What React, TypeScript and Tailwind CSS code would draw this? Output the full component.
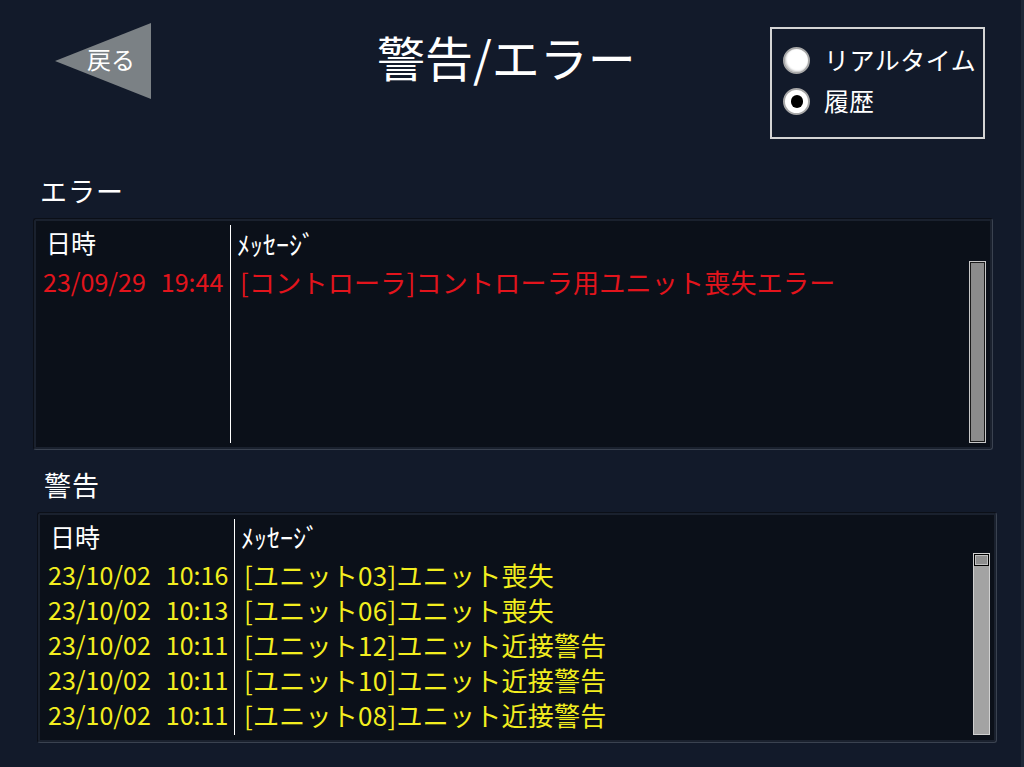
export default function App() {
  const warnings = [
    ["23/10/02", "10:16", "[ユニット03]ユニット喪失"],
    ["23/10/02", "10:13", "[ユニット06]ユニット喪失"],
    ["23/10/02", "10:11", "[ユニット12]ユニット近接警告"],
    ["23/10/02", "10:11", "[ユニット10]ユニット近接警告"],
    ["23/10/02", "10:11", "[ユニット08]ユニット近接警告"],
  ];
  return (
    <div className="w-[1024px] h-[767px] bg-[#121a2a] overflow-hidden text-white font-['Noto_Sans_CJK_JP','Noto_Sans',sans-serif] border-r-[3px] border-[#1d2737]">
      {/* Header */}
      <div className="flex items-start h-[170px]">
        <button className="relative ml-[55px] mt-[23px] w-[97px] h-[76px] flex items-center pb-[4px]">
          <svg className="absolute inset-0" width="97" height="76" viewBox="0 0 97 76">
            <polygon points="0,38 96,0 96,76" fill="#7b8185" />
          </svg>
          <span className="relative pl-[32px] text-[24px] leading-[30px] text-white">戻る</span>
        </button>
        <h1 className="ml-[225px] mt-[31px] text-[48px] leading-[50px] font-normal">警告/エラー</h1>
        <div className="ml-auto mr-[36px] mt-[27px] w-[215px] h-[112px] border-2 border-[#d4d4d4] pt-[11px] pl-[11px]">
          <div className="flex items-center h-[41px] gap-[14px]">
            <div className="w-[27px] h-[27px] rounded-full bg-white border-2 border-[#a8a8a8] shadow-[inset_1px_-1px_2px_#c0c0c0]" />
            <span className="text-[25px] leading-[30px] tracking-[0.5px] pb-[3px]">リアルタイム</span>
          </div>
          <div className="flex items-center h-[41px] gap-[14px]">
            <div className="w-[27px] h-[27px] rounded-full bg-white border-2 border-[#a8a8a8] flex items-center justify-center">
              <div className="w-[12px] h-[13px] rounded-full bg-black" />
            </div>
            <span className="text-[25px] leading-[30px] pb-[3px]">履歴</span>
          </div>
        </div>
      </div>

      {/* Error section */}
      <div className="h-[48px] pl-[40px] pt-[3px] text-[27px] leading-[36px] tracking-[1px]">エラー</div>
      <div className="ml-[33px] w-[960px] h-[232px] rounded-[3px] border border-t-[#0b0f17] border-l-[#0b0f17] border-r-[#3a4250] border-b-[#3a4250] bg-[#1a212e] p-[2px]">
        <div className="flex h-full bg-[#0b1019] pl-[3px] pt-[4px] pb-[4px] pr-[2px]">
          <div className="w-[191px] shrink-0">
            <div className="h-[42px] flex items-center pb-[6px] pl-[7px] text-[25px]">日時</div>
            <div className="h-[35px] flex items-center pb-[6px] pl-[4px] text-[25px] text-[#e3141c]">
              <span>23/09/29</span>
              <span className="ml-[15px]">19:44</span>
            </div>
          </div>
          <div className="flex-1 border-l border-white">
            <div className="h-[42px] flex items-center pb-[6px] pl-[6px] text-[26px]">ﾒｯｾｰｼﾞ</div>
            <div className="h-[35px] flex items-center pb-[6px] pl-[9px] text-[26px] text-[#e3141c] tracking-[0.25px]">[コントローラ]コントローラ用ユニット喪失エラー</div>
          </div>
          <div className="w-[17px] mt-[36px] mr-[2px] border border-[#c8c8c8] bg-[#8c8c8c] shadow-[inset_0_0_0_1px_#1a1a1a]" />
        </div>
      </div>

      {/* Warning section */}
      <div className="h-[62px] pl-[44px] pt-[17px] text-[27px] leading-[36px] tracking-[1px]">警告</div>
      <div className="ml-[37px] w-[960px] h-[231px] rounded-[3px] border border-t-[#0b0f17] border-l-[#0b0f17] border-r-[#3a4250] border-b-[#3a4250] bg-[#1a212e] p-[2px]">
        <div className="flex h-full bg-[#0b1019] pl-[3px] pt-[4px] pb-[5px] pr-[2px]">
          <div className="w-[191px] shrink-0">
            <div className="h-[41px] flex items-center pb-[6px] pl-[7px] text-[25px]">日時</div>
            {warnings.map(([d, t], i) => (
              <div key={i} className="h-[35px] flex items-center pb-[6px] pl-[5px] text-[25px] text-[#f3ee1f]">
                <span>{d}</span>
                <span className="ml-[15px]">{t}</span>
              </div>
            ))}
          </div>
          <div className="flex-1 border-l border-white">
            <div className="h-[41px] flex items-center pb-[6px] pl-[6px] text-[26px]">ﾒｯｾｰｼﾞ</div>
            {warnings.map(([, , m], i) => (
              <div key={i} className="h-[35px] flex items-center pb-[6px] pl-[9px] text-[26px] text-[#f3ee1f] tracking-[0.25px]">{m}</div>
            ))}
          </div>
          <div className="w-[17px] mt-[34px] mr-[2px] flex flex-col border border-[#d0d0d0] bg-[#a3a3a3]">
            <div className="h-[12px] border border-black bg-[#8e8e8e] shadow-[inset_0_0_0_1px_#c0c0c0]" />
          </div>
        </div>
      </div>
    </div>
  );
}
